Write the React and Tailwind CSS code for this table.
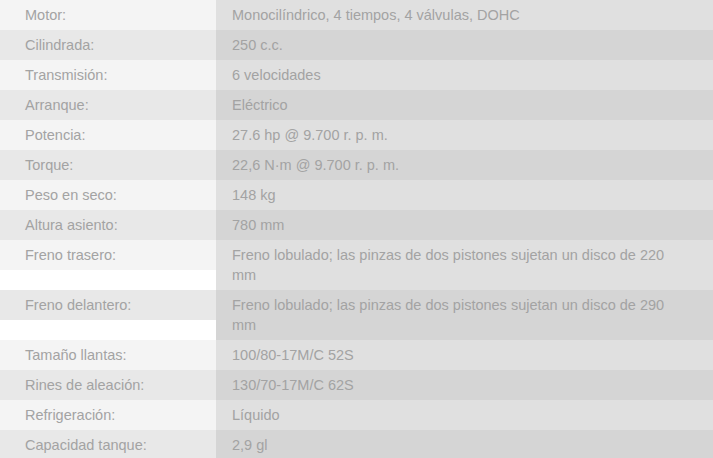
const specs = [
  ['Motor:', 'Monocilíndrico, 4 tiempos, 4 válvulas, DOHC'],
  ['Cilindrada:', '250 c.c.'],
  ['Transmisión:', '6 velocidades'],
  ['Arranque:', 'Eléctrico'],
  ['Potencia:', '27.6 hp @ 9.700 r. p. m.'],
  ['Torque:', '22,6 N·m @ 9.700 r. p. m.'],
  ['Peso en seco:', '148 kg'],
  ['Altura asiento:', '780 mm'],
  ['Freno trasero:', 'Freno lobulado; las pinzas de dos pistones sujetan un disco de 220 mm'],
  ['Freno delantero:', 'Freno lobulado; las pinzas de dos pistones sujetan un disco de 290 mm'],
  ['Tamaño llantas:', '100/80-17M/C 52S'],
  ['Rines de aleación:', '130/70-17M/C 62S'],
  ['Refrigeración:', 'Líquido'],
  ['Capacidad tanque:', '2,9 gl'],
];

const App = () => {
  return (
    <div className="w-[713px] h-[458px] overflow-hidden bg-white font-['Liberation_Sans',Arial,sans-serif] text-[14.5px] leading-[20px] text-[#a3a3a3]">
      <div className="grid grid-cols-[216px_1fr]">
        {specs.map(([label, value], i) => {
          const odd = i % 2 === 0;
          return [
            <div
              key={label}
              className={`self-start h-[30px] pl-[25px] pt-[5px] ${odd ? 'bg-[#f4f4f4]' : 'bg-[#e8e8e8]'}`}
            >
              {label}
            </div>,
            <div
              key={label + '-v'}
              className={`pl-[16px] pr-[32px] py-[5px] ${odd ? 'bg-[#e0e0e0]' : 'bg-[#d5d5d5]'}`}
            >
              {value}
            </div>,
          ];
        })}
      </div>
    </div>
  );
};

export default App;
